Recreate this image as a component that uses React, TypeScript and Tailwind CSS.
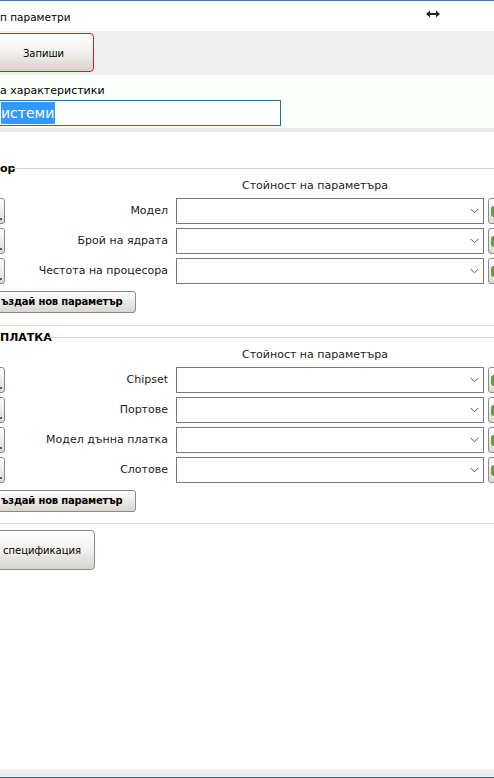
import React from "react";

const font = { fontFamily: '"DejaVu Sans", Verdana, sans-serif' };

function Chevron() {
  return (
    <svg width="9" height="6" viewBox="0 0 9 6" className="shrink-0">
      <path d="M0.5 0.8 L4.5 4.8 L8.5 0.8" fill="none" stroke="#555" strokeWidth="1" />
    </svg>
  );
}

function ParamRow({ label }: { label: string }) {
  return (
    <div className="flex items-center h-[26px]">
      {/* delete button, mostly clipped */}
      <div className="-ml-[15px] w-[20px] h-[26px] shrink-0 rounded-[3px] border border-[#8a8a8a] bg-gradient-to-b from-white to-[#dcd9d2] flex items-end justify-end pr-[2px] pb-[3px]">
        <span className="w-[2px] h-[2px] bg-[#333] rounded-full" />
      </div>
      <div className="w-[163px] shrink-0 text-right text-[11px] text-[#1b1b1b] leading-[14px]">{label}</div>
      <div className="ml-[8px] w-[308px] h-[26px] shrink-0 border border-[#7a7a7a] bg-white flex items-center justify-end pr-[4px]">
        <Chevron />
      </div>
      <div className="ml-[4px] w-[22px] h-[26px] shrink-0 rounded-[3px] border border-[#8a8a8a] bg-gradient-to-b from-white to-[#dcd9d2] flex items-center pl-[2px]">
        <span className="w-[6px] h-[11px] rounded-full bg-[#6f9a45]" />
      </div>
    </div>
  );
}

function Section({ legend, legendWidth, rows }: { legend: string; legendWidth: string; rows: string[] }) {
  return (
    <div>
      <div className="flex items-center h-[14px]">
        <span className={`text-[11px] font-bold leading-[14px] ${legendWidth}`}>{legend}</span>
        <div className="flex-1 h-px bg-[#d6d6d6] -mt-[2px]" />
      </div>
      <div className="mt-[3px] h-[14px] text-[11px] leading-[14px] pl-[242px] text-[#1b1b1b]">Стойност на параметъра</div>
      <div className="mt-[5px] flex flex-col gap-[4px]">
        {rows.map((r) => (
          <ParamRow key={r} label={r} />
        ))}
      </div>
      <button className="mt-[7px] -ml-[18px] w-[154px] h-[22px] rounded-[3px] border border-[#8a8a8a] bg-gradient-to-b from-white to-[#d9d6cf] text-[10px] font-bold text-black text-left pl-[18px] leading-[20px] tracking-[-0.2px]">
        ъздай нов параметър
      </button>
    </div>
  );
}

export default function App() {
  return (
    <div className="w-[494px] h-[778px] overflow-hidden bg-white flex flex-col text-black" style={font}>
      <div className="h-px bg-[#3d7aa3]" />
      {/* title */}
      <div className="h-[30px] flex items-start pt-[8px]">
        <span className="text-[10.5px] leading-[16px]">п параметри</span>
        <svg width="14" height="8" viewBox="0 0 14 8" className="ml-auto mr-[54px] mt-[1px]">
          <path d="M0 4 L4 0.5 L4 3 L10 3 L10 0.5 L14 4 L10 7.5 L10 5 L4 5 L4 7.5 Z" fill="#222" />
        </svg>
      </div>
      {/* toolbar */}
      <div className="h-[44px] bg-[#efefef] pt-[2px]">
        <button className="-ml-[7px] w-[101px] h-[39px] rounded-[4px] border border-[#c8262c] bg-gradient-to-b from-white via-[#f2f1ee] to-[#d6d3cb] text-[10px] text-black pt-[2px]">
          Запиши
        </button>
      </div>
      {/* name field */}
      <div className="h-[53px] bg-[#fafffa] pt-[9px]">
        <div className="text-[11px] leading-[14px]">а характеристики</div>
        <div className="mt-[2px] -ml-[20px] w-[301px] h-[26px] border border-[#2f6f9f] bg-white flex items-center pl-[20px]">
          <span className="bg-[#3399ff] text-white text-[14px] leading-[22px] pr-[1px]">истеми</span>
        </div>
      </div>
      <div className="h-[4px] bg-[#ececec]" />

      <div className="mt-[30px]">
        <Section legend="ор" legendWidth="w-[12px]" rows={["Модел", "Брой на ядрата", "Честота на процесора"]} />
      </div>
      <div className="mt-[12px] h-px bg-[#dcdcdc]" />
      <div className="mt-[5px]">
        <Section legend="ПЛАТКА" legendWidth="w-[48px]" rows={["Chipset", "Портове", "Модел дънна платка", "Слотове"]} />
      </div>
      <div className="mt-[11px] h-px bg-[#dcdcdc]" />
      <div className="mt-[6px]">
        <button className="-ml-[30px] w-[125px] h-[40px] rounded-[4px] border border-[#8a8a8a] bg-gradient-to-b from-white via-[#f2f1ee] to-[#d6d3cb] text-[10px] text-black text-left pl-[32px]">
          спецификация
        </button>
      </div>

      <div className="flex-1" />
      <div className="h-[5px] bg-[#f0f0f0]" />
      <div className="h-[3px] bg-[#dff0fb]" />
      <div className="h-px bg-[#4a6b80]" />
    </div>
  );
}
